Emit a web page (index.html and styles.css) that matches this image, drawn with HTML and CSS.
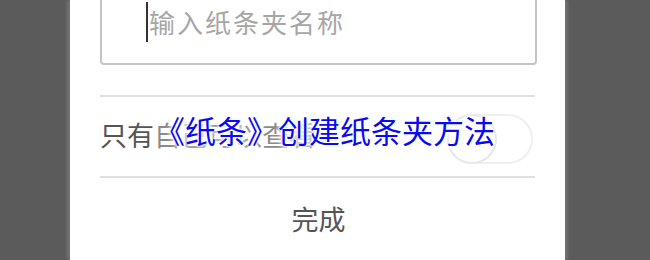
FILE: index.html
```html
<!DOCTYPE html>
<html lang="zh">
<head>
<meta charset="utf-8">
<link rel="stylesheet" href="styles.css">
</head>
<body>
<div class="stage">
  <div class="panel">
    <div class="input">
      <span class="cursor"></span>
      <span class="placeholder">输入纸条夹名称</span>
    </div>
    <div class="divider first"></div>
    <div class="row">
      <span class="label">只有<span class="hidden-part">自己可以查看</span></span>
      <span class="switch"><span class="knob"></span></span>
    </div>
    <div class="divider"></div>
    <div class="done">完成</div>
  </div>
  <div class="title">《纸条》创建纸条夹方法</div>
</div>
</body>
</html>
```

FILE: styles.css
```css
html, body {
  margin: 0;
  padding: 0;
  background: #5b5b5b;
  font-family: "Noto Sans CJK SC", "Noto Sans", sans-serif;
}
.stage {
  position: relative;
  width: 650px;
  height: 260px;
  overflow: hidden;
}
.panel {
  margin-left: 70px;
  width: 495px;
  height: 260px;
  background: #ffffff;
  box-sizing: border-box;
  padding: 0 28px 0 30px;
  display: flex;
  flex-direction: column;
  box-shadow: -3px 0 3px rgba(255,255,255,0.15), 3px 0 3px rgba(255,255,255,0.15);
}
.input {
  margin-top: -22px;
  height: 87px;
  box-sizing: border-box;
  border: 2px solid #c4c4c4;
  border-radius: 4px;
  display: flex;
  align-items: flex-end;
  padding: 0 0 26px 44px;
}
.cursor {
  width: 2px;
  height: 40px;
  background: #333;
  margin-bottom: -5px;
  margin-right: 1px;
}
.placeholder {
  font-size: 26px;
  line-height: 30px;
  color: #a6a6a6;
  letter-spacing: 2px;
}
.divider {
  height: 2px;
  background: #e0e0e0;
  margin-right: 2px;
}
.divider.first {
  margin-top: 30px;
}
.row {
  height: 79px;
  display: flex;
  align-items: center;
  justify-content: space-between;
}
.label {
  font-size: 27px;
  color: #555;
  margin-top: -4px;
}
.hidden-part {
  color: #8a8a8a;
}
.switch {
  width: 86px;
  height: 50px;
  box-sizing: border-box;
  border: 2px solid #efefef;
  border-radius: 25px;
  position: relative;
  margin-right: 4px;
  margin-top: 4px;
}
.knob {
  position: absolute;
  left: -2px;
  top: -2px;
  width: 50px;
  height: 50px;
  box-sizing: border-box;
  border: 2px solid #e8e8e8;
  border-radius: 50%;
  background: #fff;
}
.done {
  flex: 1;
  display: flex;
  justify-content: center;
  align-items: center;
  font-size: 27px;
  color: #555;
  padding-bottom: 2px;
}
.title {
  position: absolute;
  left: 154px;
  top: 108px;
  font-size: 31px;
  line-height: 44px;
  color: #0a0af2;
  text-shadow: 0 0 2px #fff, 0 0 3px #fff, 0 0 4px #fff, 0 0 5px #fff, 0 0 6px #fff;
  white-space: nowrap;
}
```
